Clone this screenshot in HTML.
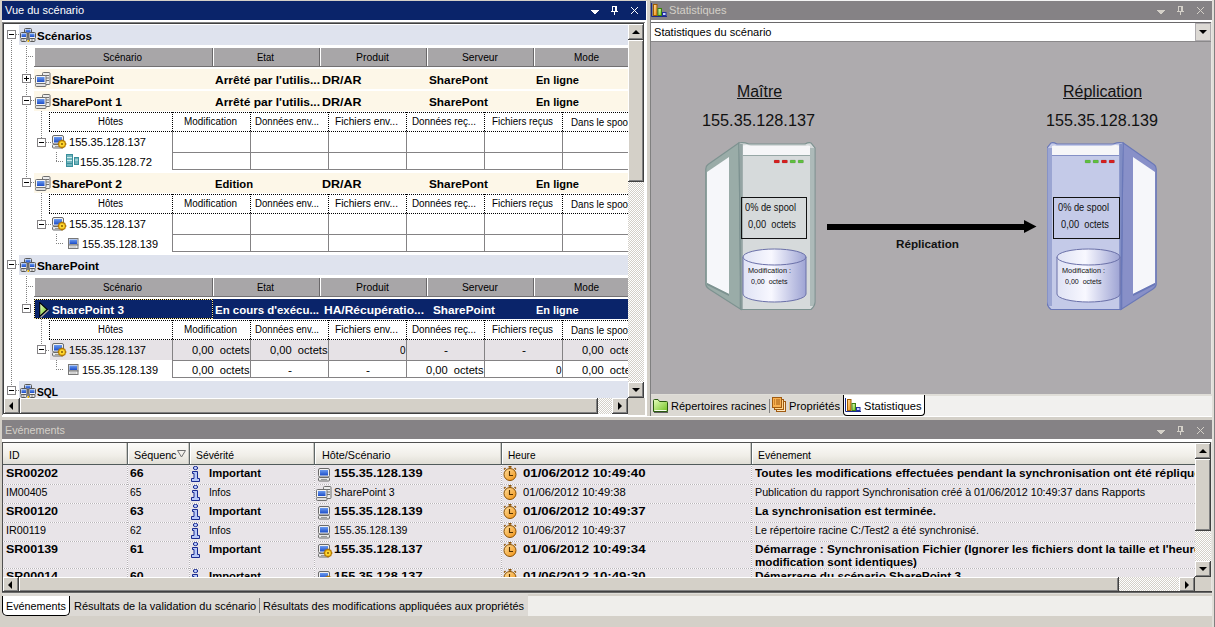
<!DOCTYPE html><html><head><meta charset="utf-8"><style>
html,body{margin:0;padding:0;width:1215px;height:627px;overflow:hidden;background:#d4d0c8}
body{position:relative;font-family:"Liberation Sans",sans-serif}
div{position:absolute;box-sizing:border-box}
.t{white-space:pre;line-height:1;height:auto;width:auto}
</style></head><body>
<svg width="0" height="0" style="position:absolute"><defs><linearGradient id="bs" x1="0" y1="0" x2="0" y2="1"><stop offset="0" stop-color="#6a9af0"/><stop offset="1" stop-color="#1e4ec8"/></linearGradient><linearGradient id="grn" x1="0" y1="0" x2="1" y2="1"><stop offset="0" stop-color="#f0ffd0"/><stop offset="1" stop-color="#60c010"/></linearGradient><linearGradient id="org" x1="0" y1="0" x2="1" y2="1"><stop offset="0" stop-color="#ffe0a0"/><stop offset="1" stop-color="#f09010"/></linearGradient><linearGradient id="fold" x1="0" y1="0" x2="1" y2="1"><stop offset="0" stop-color="#e8ffc0"/><stop offset="1" stop-color="#70c020"/></linearGradient><linearGradient id="cg" x1="0" x2="1"><stop offset="0" stop-color="#dfe2f4"/><stop offset="0.45" stop-color="#f8f8ff"/><stop offset="1" stop-color="#9ea4d4"/></linearGradient></defs></svg>
<div style="left:2px;top:1px;width:644px;height:19px;background:#0a246a"></div>
<div class="t" style="left:5px;top:4.69px;font-size:11px;font-weight:normal;color:#fff;">Vue du scénario</div>
<svg style="position:absolute;left:591px;top:7px" width="8" height="8" viewBox="0 0 8 8"><g fill="#fff"><rect x="0" y="3" width="8" height="1"/><rect x="1" y="4" width="6" height="1"/><rect x="2" y="5" width="4" height="1"/><rect x="3" y="6" width="2" height="1"/></g></svg>
<svg style="position:absolute;left:611px;top:6px" width="7" height="9" viewBox="0 0 7 9"><g fill="#fff"><rect x="1" y="0" width="5" height="1"/><rect x="1" y="1" width="1" height="4"/><rect x="4" y="1" width="2" height="4"/><rect x="0" y="5" width="7" height="1"/><rect x="3" y="6" width="1" height="3"/></g></svg>
<svg style="position:absolute;left:631px;top:7px" width="7" height="7" viewBox="0 0 7 7"><g fill="#fff"><rect x="0" y="0" width="1" height="1"/><rect x="6" y="0" width="1" height="1"/><rect x="1" y="1" width="1" height="1"/><rect x="5" y="1" width="1" height="1"/><rect x="2" y="2" width="1" height="1"/><rect x="4" y="2" width="1" height="1"/><rect x="3" y="3" width="1" height="1"/><rect x="3" y="3" width="1" height="1"/><rect x="4" y="4" width="1" height="1"/><rect x="2" y="4" width="1" height="1"/><rect x="5" y="5" width="1" height="1"/><rect x="1" y="5" width="1" height="1"/><rect x="6" y="6" width="1" height="1"/><rect x="0" y="6" width="1" height="1"/></g></svg>
<div style="left:2px;top:20px;width:644px;height:2px;background:#fff"></div>
<div style="left:2px;top:22px;width:643px;height:393px;background:#fff;border-top:1px solid #808080;border-left:1px solid #808080;"></div>
<div style="left:3px;top:23px;width:641px;height:391px;border-top:1px solid #404040;border-left:1px solid #404040;"></div>
<div style="left:11px;top:40px;width:1px;height:346px;background:repeating-linear-gradient(180deg,#808080 0 1px,transparent 1px 2px)"></div>
<div style="left:26px;top:46px;width:1px;height:28px;background:repeating-linear-gradient(180deg,#808080 0 1px,transparent 1px 2px)"></div>
<div style="left:28px;top:56px;width:6px;height:1px;background:repeating-linear-gradient(90deg,#808080 0 1px,transparent 1px 2px)"></div>
<div style="left:26px;top:84px;width:1px;height:12px;background:repeating-linear-gradient(180deg,#808080 0 1px,transparent 1px 2px)"></div>
<div style="left:26px;top:106px;width:1px;height:72px;background:repeating-linear-gradient(180deg,#808080 0 1px,transparent 1px 2px)"></div>
<div style="left:26px;top:276px;width:1px;height:28px;background:repeating-linear-gradient(180deg,#808080 0 1px,transparent 1px 2px)"></div>
<div style="left:28px;top:286px;width:6px;height:1px;background:repeating-linear-gradient(90deg,#808080 0 1px,transparent 1px 2px)"></div>
<div style="left:19px;top:25px;width:609px;height:20px;background:#dfe3ee"></div>
<svg style="position:absolute;left:7px;top:30px" width="9" height="9" viewBox="0 0 9 9"><rect x="0.5" y="0.5" width="8" height="8" fill="#fff" stroke="#848284"/><line x1="2" y1="4.5" x2="7" y2="4.5" stroke="#000"/></svg>
<div style="left:16px;top:34px;width:4px;height:1px;background:repeating-linear-gradient(90deg,#808080 0 1px,transparent 1px 2px)"></div>
<svg style="position:absolute;left:20px;top:28px" width="16" height="15" viewBox="0 0 16 15"><rect x="7" y="4" width="2" height="8" fill="#808080"/><rect x="4.5" y="0.5" width="7" height="4.5" rx="1" fill="#f4f4f4" stroke="#585858"/><rect x="5.5" y="1.5" width="5" height="3" fill="url(#bs)"/><rect x="0.5" y="4.5" width="6.5" height="6" rx="1" fill="#f4f4f4" stroke="#585858"/><rect x="1.5" y="5.5" width="4.5" height="3.5" fill="url(#bs)"/><rect x="9" y="4.5" width="6.5" height="6" rx="1" fill="#f4f4f4" stroke="#585858"/><rect x="10" y="5.5" width="4.5" height="3.5" fill="url(#bs)"/><rect x="1" y="10.5" width="5.5" height="3" rx="1" fill="#e4e4e4" stroke="#585858"/><rect x="9.5" y="10.5" width="5.5" height="3" rx="1" fill="#e4e4e4" stroke="#585858"/><line x1="2.5" y1="12" x2="4.5" y2="12" stroke="#888"/><line x1="11" y1="12" x2="13" y2="12" stroke="#888"/><rect x="7.5" y="12" width="1.5" height="2" fill="#f0b800"/></svg>
<div class="t" style="left:37px;top:30.69px;font-size:11px;font-weight:bold;color:#000;transform:scaleX(1.0460);transform-origin:0 0;">Scénarios</div>
<div style="left:35px;top:48px;width:593px;height:19px;background:#a8a6a8"></div>
<div style="left:34px;top:66px;width:594px;height:1px;background:#727072"></div>
<div style="left:212px;top:48px;width:1px;height:18px;background:#6a686a"></div>
<div style="left:213px;top:48px;width:1px;height:18px;background:#fff"></div>
<div style="left:319px;top:48px;width:1px;height:18px;background:#6a686a"></div>
<div style="left:320px;top:48px;width:1px;height:18px;background:#fff"></div>
<div style="left:426px;top:48px;width:1px;height:18px;background:#6a686a"></div>
<div style="left:427px;top:48px;width:1px;height:18px;background:#fff"></div>
<div style="left:533px;top:48px;width:1px;height:18px;background:#6a686a"></div>
<div style="left:534px;top:48px;width:1px;height:18px;background:#fff"></div>
<div class="t" style="left:103px;top:52.53px;font-size:10px;font-weight:normal;color:#000;transform:scaleX(0.9881);transform-origin:0 0;">Scénario</div>
<div class="t" style="left:257px;top:52.53px;font-size:10px;font-weight:normal;color:#000;transform:scaleX(0.9557);transform-origin:0 0;">Etat</div>
<div class="t" style="left:356px;top:52.53px;font-size:10px;font-weight:normal;color:#000;transform:scaleX(1.0415);transform-origin:0 0;">Produit</div>
<div class="t" style="left:462px;top:52.53px;font-size:10px;font-weight:normal;color:#000;transform:scaleX(1.0281);transform-origin:0 0;">Serveur</div>
<div class="t" style="left:574px;top:52.53px;font-size:10px;font-weight:normal;color:#000;">Mode</div>
<div style="left:31px;top:78px;width:4px;height:1px;background:repeating-linear-gradient(90deg,#808080 0 1px,transparent 1px 2px)"></div>
<div style="left:34px;top:69px;width:594px;height:20px;background:#fdf7e8"></div>
<svg style="position:absolute;left:22px;top:74px" width="9" height="9" viewBox="0 0 9 9"><rect x="0.5" y="0.5" width="8" height="8" fill="#fff" stroke="#848284"/><line x1="2" y1="4.5" x2="7" y2="4.5" stroke="#000"/><line x1="4.5" y1="2" x2="4.5" y2="7" stroke="#000"/></svg>
<svg style="position:absolute;left:35px;top:72px" width="16" height="15" viewBox="0 0 16 15"><rect x="7.5" y="0.5" width="7.5" height="12" rx="1" fill="#ececec" stroke="#707070"/><line x1="10" y1="3.5" x2="14" y2="3.5" stroke="#707070"/><line x1="10" y1="6" x2="14" y2="6" stroke="#707070"/><line x1="10" y1="8.5" x2="14" y2="8.5" stroke="#707070"/><rect x="0.5" y="3.5" width="10.5" height="8" rx="1" fill="#f4f4f4" stroke="#707070"/><rect x="2" y="5" width="7.5" height="5" fill="url(#bs)"/><rect x="0.5" y="11.5" width="10.5" height="3" rx="1" fill="#e0e0e0" stroke="#707070"/></svg>
<div class="t" style="left:52px;top:74.69px;font-size:11px;font-weight:bold;color:#000;transform:scaleX(1.0677);transform-origin:0 0;">SharePoint</div>
<div class="t" style="left:215px;top:74.69px;font-size:11px;font-weight:bold;color:#000;transform:scaleX(1.0921);transform-origin:0 0;">Arrêté par l&#x27;utilis...</div>
<div class="t" style="left:322px;top:74.69px;font-size:11px;font-weight:bold;color:#000;transform:scaleX(1.1340);transform-origin:0 0;">DR/AR</div>
<div class="t" style="left:429px;top:74.69px;font-size:11px;font-weight:bold;color:#000;transform:scaleX(1.0725);transform-origin:0 0;">SharePont</div>
<div class="t" style="left:536px;top:74.69px;font-size:11px;font-weight:bold;color:#000;transform:scaleX(1.0051);transform-origin:0 0;">En ligne</div>
<div style="left:31px;top:100px;width:4px;height:1px;background:repeating-linear-gradient(90deg,#808080 0 1px,transparent 1px 2px)"></div>
<div style="left:34px;top:91px;width:594px;height:20px;background:#fdf7e8"></div>
<svg style="position:absolute;left:22px;top:96px" width="9" height="9" viewBox="0 0 9 9"><rect x="0.5" y="0.5" width="8" height="8" fill="#fff" stroke="#848284"/><line x1="2" y1="4.5" x2="7" y2="4.5" stroke="#000"/></svg>
<svg style="position:absolute;left:35px;top:94px" width="16" height="15" viewBox="0 0 16 15"><rect x="7.5" y="0.5" width="7.5" height="12" rx="1" fill="#ececec" stroke="#707070"/><line x1="10" y1="3.5" x2="14" y2="3.5" stroke="#707070"/><line x1="10" y1="6" x2="14" y2="6" stroke="#707070"/><line x1="10" y1="8.5" x2="14" y2="8.5" stroke="#707070"/><rect x="0.5" y="3.5" width="10.5" height="8" rx="1" fill="#f4f4f4" stroke="#707070"/><rect x="2" y="5" width="7.5" height="5" fill="url(#bs)"/><rect x="0.5" y="11.5" width="10.5" height="3" rx="1" fill="#e0e0e0" stroke="#707070"/></svg>
<div class="t" style="left:52px;top:96.69px;font-size:11px;font-weight:bold;color:#000;transform:scaleX(1.0906);transform-origin:0 0;">SharePont 1</div>
<div class="t" style="left:215px;top:96.69px;font-size:11px;font-weight:bold;color:#000;transform:scaleX(1.0921);transform-origin:0 0;">Arrêté par l&#x27;utilis...</div>
<div class="t" style="left:322px;top:96.69px;font-size:11px;font-weight:bold;color:#000;transform:scaleX(1.1340);transform-origin:0 0;">DR/AR</div>
<div class="t" style="left:429px;top:96.69px;font-size:11px;font-weight:bold;color:#000;transform:scaleX(1.0725);transform-origin:0 0;">SharePont</div>
<div class="t" style="left:536px;top:96.69px;font-size:11px;font-weight:bold;color:#000;transform:scaleX(1.0051);transform-origin:0 0;">En ligne</div>
<div style="left:41px;top:111px;width:1px;height:27px;background:repeating-linear-gradient(180deg,#808080 0 1px,transparent 1px 2px)"></div>
<div style="left:46px;top:142px;width:6px;height:1px;background:repeating-linear-gradient(90deg,#808080 0 1px,transparent 1px 2px)"></div>
<div style="left:49px;top:112px;width:580px;height:1px;background:repeating-linear-gradient(90deg,#000 0 1px,transparent 1px 2px)"></div>
<div style="left:49px;top:131px;width:580px;height:1px;background:repeating-linear-gradient(90deg,#000 0 1px,transparent 1px 2px)"></div>
<div style="left:49px;top:112px;width:1px;height:20px;background:repeating-linear-gradient(180deg,#000 0 1px,transparent 1px 2px)"></div>
<div style="left:628px;top:112px;width:1px;height:20px;background:repeating-linear-gradient(180deg,#000 0 1px,transparent 1px 2px)"></div>
<div style="left:172px;top:112px;width:1px;height:20px;background:repeating-linear-gradient(180deg,#000 0 1px,transparent 1px 2px)"></div>
<div style="left:250px;top:112px;width:1px;height:20px;background:repeating-linear-gradient(180deg,#000 0 1px,transparent 1px 2px)"></div>
<div style="left:328px;top:112px;width:1px;height:20px;background:repeating-linear-gradient(180deg,#000 0 1px,transparent 1px 2px)"></div>
<div style="left:406px;top:112px;width:1px;height:20px;background:repeating-linear-gradient(180deg,#000 0 1px,transparent 1px 2px)"></div>
<div style="left:484px;top:112px;width:1px;height:20px;background:repeating-linear-gradient(180deg,#000 0 1px,transparent 1px 2px)"></div>
<div style="left:562px;top:112px;width:1px;height:20px;background:repeating-linear-gradient(180deg,#000 0 1px,transparent 1px 2px)"></div>
<div class="t" style="left:98px;top:116.53px;font-size:10px;font-weight:normal;color:#000;transform:scaleX(0.9570);transform-origin:0 0;">Hôtes</div>
<div class="t" style="left:184px;top:116.53px;font-size:10px;font-weight:normal;color:#000;transform:scaleX(0.9933);transform-origin:0 0;">Modification</div>
<div class="t" style="left:255px;top:116.53px;font-size:10px;font-weight:normal;color:#000;transform:scaleX(0.9621);transform-origin:0 0;">Données env...</div>
<div class="t" style="left:335px;top:116.53px;font-size:10px;font-weight:normal;color:#000;transform:scaleX(1.0244);transform-origin:0 0;">Fichiers env...</div>
<div class="t" style="left:412px;top:116.53px;font-size:10px;font-weight:normal;color:#000;transform:scaleX(0.9841);transform-origin:0 0;">Données reç...</div>
<div class="t" style="left:492px;top:116.53px;font-size:10px;font-weight:normal;color:#000;transform:scaleX(0.9801);transform-origin:0 0;">Fichiers reçus</div>
<div style="left:571px;top:113px;width:57px;height:18px;overflow:hidden">
<div class="t" style="left:0px;top:4.54px;font-size:10px;font-weight:normal;color:#000;transform:scaleX(0.9765);transform-origin:0 0;">Dans le spoo</div>
</div>
<div style="left:172px;top:152px;width:456px;height:1px;background:#848284"></div>
<div style="left:172px;top:131px;width:1px;height:21px;background:#848284"></div>
<div style="left:250px;top:131px;width:1px;height:21px;background:#848284"></div>
<div style="left:328px;top:131px;width:1px;height:21px;background:#848284"></div>
<div style="left:406px;top:131px;width:1px;height:21px;background:#848284"></div>
<div style="left:484px;top:131px;width:1px;height:21px;background:#848284"></div>
<div style="left:562px;top:131px;width:1px;height:21px;background:#848284"></div>
<div style="left:172px;top:169px;width:456px;height:1px;background:#848284"></div>
<div style="left:172px;top:152px;width:1px;height:17px;background:#848284"></div>
<div style="left:250px;top:152px;width:1px;height:17px;background:#848284"></div>
<div style="left:328px;top:152px;width:1px;height:17px;background:#848284"></div>
<div style="left:406px;top:152px;width:1px;height:17px;background:#848284"></div>
<div style="left:484px;top:152px;width:1px;height:17px;background:#848284"></div>
<div style="left:562px;top:152px;width:1px;height:17px;background:#848284"></div>
<svg style="position:absolute;left:37px;top:138px" width="9" height="9" viewBox="0 0 9 9"><rect x="0.5" y="0.5" width="8" height="8" fill="#fff" stroke="#848284"/><line x1="2" y1="4.5" x2="7" y2="4.5" stroke="#000"/></svg>
<svg style="position:absolute;left:52px;top:135px" width="12" height="14" viewBox="0 0 12 14"><rect x="0.5" y="0.5" width="11" height="8.5" rx="1.5" fill="#f0f0f0" stroke="#6a6a6a"/><rect x="2" y="2" width="8" height="5.5" fill="url(#bs)"/><rect x="0.5" y="9.5" width="11" height="3.5" rx="1" fill="#e8e8e8" stroke="#6a6a6a"/><line x1="3" y1="11.5" x2="9" y2="11.5" stroke="#999"/></svg>
<svg style="position:absolute;left:57px;top:139px" width="10" height="10" viewBox="0 0 10 10"><g transform="translate(5 5)"><circle r="3.6" fill="#f8c820" stroke="#a06800" stroke-width="1"/><path d="M0 -4.6 V4.6 M-4.6 0 H4.6 M-3.2 -3.2 L3.2 3.2 M3.2 -3.2 L-3.2 3.2" stroke="#c08000" stroke-width="1.2"/><circle r="2.6" fill="#ffd830"/><circle r="0.9" fill="#7a5000"/></g></svg>
<div class="t" style="left:69px;top:136.69px;font-size:11px;font-weight:normal;color:#000;transform:scaleX(1.0070);transform-origin:0 0;">155.35.128.137</div>
<div style="left:56px;top:152px;width:1px;height:10px;background:repeating-linear-gradient(180deg,#808080 0 1px,transparent 1px 2px)"></div>
<div style="left:56px;top:161px;width:7px;height:1px;background:repeating-linear-gradient(90deg,#808080 0 1px,transparent 1px 2px)"></div>
<svg style="position:absolute;left:66px;top:154px" width="14" height="13" viewBox="0 0 14 13"><rect x="0" y="0" width="7" height="13" fill="#3a8f9c"/><rect x="1" y="1" width="5" height="11" fill="#70b4bc"/><line x1="1" y1="3.5" x2="6" y2="3.5" stroke="#d0eef0"/><line x1="1" y1="6.5" x2="6" y2="6.5" stroke="#d0eef0"/><line x1="1" y1="9.5" x2="6" y2="9.5" stroke="#3a8f9c"/><rect x="8" y="3" width="5" height="8" fill="#3a8f9c"/><rect x="9" y="4" width="3" height="6" fill="#70b4bc"/><line x1="9" y1="6" x2="12" y2="6" stroke="#d0eef0"/></svg>
<div class="t" style="left:80px;top:156.69px;font-size:11px;font-weight:normal;color:#000;transform:scaleX(1.0235);transform-origin:0 0;">155.35.128.72</div>
<div style="left:31px;top:182px;width:4px;height:1px;background:repeating-linear-gradient(90deg,#808080 0 1px,transparent 1px 2px)"></div>
<div style="left:34px;top:173px;width:594px;height:20px;background:#fdf7e8"></div>
<svg style="position:absolute;left:22px;top:178px" width="9" height="9" viewBox="0 0 9 9"><rect x="0.5" y="0.5" width="8" height="8" fill="#fff" stroke="#848284"/><line x1="2" y1="4.5" x2="7" y2="4.5" stroke="#000"/></svg>
<svg style="position:absolute;left:35px;top:176px" width="16" height="15" viewBox="0 0 16 15"><rect x="7.5" y="0.5" width="7.5" height="12" rx="1" fill="#ececec" stroke="#707070"/><line x1="10" y1="3.5" x2="14" y2="3.5" stroke="#707070"/><line x1="10" y1="6" x2="14" y2="6" stroke="#707070"/><line x1="10" y1="8.5" x2="14" y2="8.5" stroke="#707070"/><rect x="0.5" y="3.5" width="10.5" height="8" rx="1" fill="#f4f4f4" stroke="#707070"/><rect x="2" y="5" width="7.5" height="5" fill="url(#bs)"/><rect x="0.5" y="11.5" width="10.5" height="3" rx="1" fill="#e0e0e0" stroke="#707070"/></svg>
<div class="t" style="left:52px;top:178.69px;font-size:11px;font-weight:bold;color:#000;transform:scaleX(1.0906);transform-origin:0 0;">SharePont 2</div>
<div class="t" style="left:215px;top:178.69px;font-size:11px;font-weight:bold;color:#000;transform:scaleX(1.0196);transform-origin:0 0;">Edition</div>
<div class="t" style="left:322px;top:178.69px;font-size:11px;font-weight:bold;color:#000;transform:scaleX(1.1340);transform-origin:0 0;">DR/AR</div>
<div class="t" style="left:429px;top:178.69px;font-size:11px;font-weight:bold;color:#000;transform:scaleX(1.0725);transform-origin:0 0;">SharePont</div>
<div class="t" style="left:536px;top:178.69px;font-size:11px;font-weight:bold;color:#000;transform:scaleX(1.0051);transform-origin:0 0;">En ligne</div>
<div style="left:41px;top:193px;width:1px;height:27px;background:repeating-linear-gradient(180deg,#808080 0 1px,transparent 1px 2px)"></div>
<div style="left:46px;top:224px;width:6px;height:1px;background:repeating-linear-gradient(90deg,#808080 0 1px,transparent 1px 2px)"></div>
<div style="left:49px;top:194px;width:580px;height:1px;background:repeating-linear-gradient(90deg,#000 0 1px,transparent 1px 2px)"></div>
<div style="left:49px;top:213px;width:580px;height:1px;background:repeating-linear-gradient(90deg,#000 0 1px,transparent 1px 2px)"></div>
<div style="left:49px;top:194px;width:1px;height:20px;background:repeating-linear-gradient(180deg,#000 0 1px,transparent 1px 2px)"></div>
<div style="left:628px;top:194px;width:1px;height:20px;background:repeating-linear-gradient(180deg,#000 0 1px,transparent 1px 2px)"></div>
<div style="left:172px;top:194px;width:1px;height:20px;background:repeating-linear-gradient(180deg,#000 0 1px,transparent 1px 2px)"></div>
<div style="left:250px;top:194px;width:1px;height:20px;background:repeating-linear-gradient(180deg,#000 0 1px,transparent 1px 2px)"></div>
<div style="left:328px;top:194px;width:1px;height:20px;background:repeating-linear-gradient(180deg,#000 0 1px,transparent 1px 2px)"></div>
<div style="left:406px;top:194px;width:1px;height:20px;background:repeating-linear-gradient(180deg,#000 0 1px,transparent 1px 2px)"></div>
<div style="left:484px;top:194px;width:1px;height:20px;background:repeating-linear-gradient(180deg,#000 0 1px,transparent 1px 2px)"></div>
<div style="left:562px;top:194px;width:1px;height:20px;background:repeating-linear-gradient(180deg,#000 0 1px,transparent 1px 2px)"></div>
<div class="t" style="left:98px;top:198.53px;font-size:10px;font-weight:normal;color:#000;transform:scaleX(0.9570);transform-origin:0 0;">Hôtes</div>
<div class="t" style="left:184px;top:198.53px;font-size:10px;font-weight:normal;color:#000;transform:scaleX(0.9933);transform-origin:0 0;">Modification</div>
<div class="t" style="left:255px;top:198.53px;font-size:10px;font-weight:normal;color:#000;transform:scaleX(0.9621);transform-origin:0 0;">Données env...</div>
<div class="t" style="left:335px;top:198.53px;font-size:10px;font-weight:normal;color:#000;transform:scaleX(1.0244);transform-origin:0 0;">Fichiers env...</div>
<div class="t" style="left:412px;top:198.53px;font-size:10px;font-weight:normal;color:#000;transform:scaleX(0.9841);transform-origin:0 0;">Données reç...</div>
<div class="t" style="left:492px;top:198.53px;font-size:10px;font-weight:normal;color:#000;transform:scaleX(0.9801);transform-origin:0 0;">Fichiers reçus</div>
<div style="left:571px;top:195px;width:57px;height:18px;overflow:hidden">
<div class="t" style="left:0px;top:4.54px;font-size:10px;font-weight:normal;color:#000;transform:scaleX(0.9765);transform-origin:0 0;">Dans le spoo</div>
</div>
<div style="left:172px;top:234px;width:456px;height:1px;background:#848284"></div>
<div style="left:172px;top:213px;width:1px;height:21px;background:#848284"></div>
<div style="left:250px;top:213px;width:1px;height:21px;background:#848284"></div>
<div style="left:328px;top:213px;width:1px;height:21px;background:#848284"></div>
<div style="left:406px;top:213px;width:1px;height:21px;background:#848284"></div>
<div style="left:484px;top:213px;width:1px;height:21px;background:#848284"></div>
<div style="left:562px;top:213px;width:1px;height:21px;background:#848284"></div>
<div style="left:172px;top:251px;width:456px;height:1px;background:#848284"></div>
<div style="left:172px;top:234px;width:1px;height:17px;background:#848284"></div>
<div style="left:250px;top:234px;width:1px;height:17px;background:#848284"></div>
<div style="left:328px;top:234px;width:1px;height:17px;background:#848284"></div>
<div style="left:406px;top:234px;width:1px;height:17px;background:#848284"></div>
<div style="left:484px;top:234px;width:1px;height:17px;background:#848284"></div>
<div style="left:562px;top:234px;width:1px;height:17px;background:#848284"></div>
<svg style="position:absolute;left:37px;top:220px" width="9" height="9" viewBox="0 0 9 9"><rect x="0.5" y="0.5" width="8" height="8" fill="#fff" stroke="#848284"/><line x1="2" y1="4.5" x2="7" y2="4.5" stroke="#000"/></svg>
<svg style="position:absolute;left:52px;top:217px" width="12" height="14" viewBox="0 0 12 14"><rect x="0.5" y="0.5" width="11" height="8.5" rx="1.5" fill="#f0f0f0" stroke="#6a6a6a"/><rect x="2" y="2" width="8" height="5.5" fill="url(#bs)"/><rect x="0.5" y="9.5" width="11" height="3.5" rx="1" fill="#e8e8e8" stroke="#6a6a6a"/><line x1="3" y1="11.5" x2="9" y2="11.5" stroke="#999"/></svg>
<svg style="position:absolute;left:57px;top:221px" width="10" height="10" viewBox="0 0 10 10"><g transform="translate(5 5)"><circle r="3.6" fill="#f8c820" stroke="#a06800" stroke-width="1"/><path d="M0 -4.6 V4.6 M-4.6 0 H4.6 M-3.2 -3.2 L3.2 3.2 M3.2 -3.2 L-3.2 3.2" stroke="#c08000" stroke-width="1.2"/><circle r="2.6" fill="#ffd830"/><circle r="0.9" fill="#7a5000"/></g></svg>
<div class="t" style="left:69px;top:218.69px;font-size:11px;font-weight:normal;color:#000;transform:scaleX(1.0070);transform-origin:0 0;">155.35.128.137</div>
<div style="left:56px;top:234px;width:1px;height:8px;background:repeating-linear-gradient(180deg,#808080 0 1px,transparent 1px 2px)"></div>
<div style="left:56px;top:243px;width:7px;height:1px;background:repeating-linear-gradient(90deg,#808080 0 1px,transparent 1px 2px)"></div>
<svg style="position:absolute;left:68px;top:238px" width="11" height="11" viewBox="0 0 11 11"><rect x="0.5" y="0.5" width="9.5" height="6.5" fill="#f0f0f0" stroke="#777"/><rect x="1.5" y="1.5" width="7.5" height="4.5" fill="url(#bs)"/><rect x="0.5" y="7" width="9.5" height="3.5" fill="#eaeaea" stroke="#777"/><line x1="2" y1="9" x2="8" y2="9" stroke="#bbb"/></svg>
<div class="t" style="left:82px;top:238.69px;font-size:11px;font-weight:normal;color:#000;transform:scaleX(0.9939);transform-origin:0 0;">155.35.128.139</div>
<div style="left:19px;top:255px;width:609px;height:20px;background:#dfe3ee"></div>
<svg style="position:absolute;left:7px;top:260px" width="9" height="9" viewBox="0 0 9 9"><rect x="0.5" y="0.5" width="8" height="8" fill="#fff" stroke="#848284"/><line x1="2" y1="4.5" x2="7" y2="4.5" stroke="#000"/></svg>
<div style="left:16px;top:264px;width:4px;height:1px;background:repeating-linear-gradient(90deg,#808080 0 1px,transparent 1px 2px)"></div>
<svg style="position:absolute;left:20px;top:258px" width="16" height="15" viewBox="0 0 16 15"><rect x="7" y="4" width="2" height="8" fill="#808080"/><rect x="4.5" y="0.5" width="7" height="4.5" rx="1" fill="#f4f4f4" stroke="#585858"/><rect x="5.5" y="1.5" width="5" height="3" fill="url(#bs)"/><rect x="0.5" y="4.5" width="6.5" height="6" rx="1" fill="#f4f4f4" stroke="#585858"/><rect x="1.5" y="5.5" width="4.5" height="3.5" fill="url(#bs)"/><rect x="9" y="4.5" width="6.5" height="6" rx="1" fill="#f4f4f4" stroke="#585858"/><rect x="10" y="5.5" width="4.5" height="3.5" fill="url(#bs)"/><rect x="1" y="10.5" width="5.5" height="3" rx="1" fill="#e4e4e4" stroke="#585858"/><rect x="9.5" y="10.5" width="5.5" height="3" rx="1" fill="#e4e4e4" stroke="#585858"/><line x1="2.5" y1="12" x2="4.5" y2="12" stroke="#888"/><line x1="11" y1="12" x2="13" y2="12" stroke="#888"/><rect x="7.5" y="12" width="1.5" height="2" fill="#f0b800"/></svg>
<div class="t" style="left:37px;top:260.69px;font-size:11px;font-weight:bold;color:#000;transform:scaleX(1.0677);transform-origin:0 0;">SharePoint</div>
<div style="left:35px;top:278px;width:593px;height:19px;background:#a8a6a8"></div>
<div style="left:34px;top:296px;width:594px;height:1px;background:#727072"></div>
<div style="left:212px;top:278px;width:1px;height:18px;background:#6a686a"></div>
<div style="left:213px;top:278px;width:1px;height:18px;background:#fff"></div>
<div style="left:319px;top:278px;width:1px;height:18px;background:#6a686a"></div>
<div style="left:320px;top:278px;width:1px;height:18px;background:#fff"></div>
<div style="left:426px;top:278px;width:1px;height:18px;background:#6a686a"></div>
<div style="left:427px;top:278px;width:1px;height:18px;background:#fff"></div>
<div style="left:533px;top:278px;width:1px;height:18px;background:#6a686a"></div>
<div style="left:534px;top:278px;width:1px;height:18px;background:#fff"></div>
<div class="t" style="left:103px;top:282.54px;font-size:10px;font-weight:normal;color:#000;transform:scaleX(0.9881);transform-origin:0 0;">Scénario</div>
<div class="t" style="left:257px;top:282.54px;font-size:10px;font-weight:normal;color:#000;transform:scaleX(0.9557);transform-origin:0 0;">Etat</div>
<div class="t" style="left:356px;top:282.54px;font-size:10px;font-weight:normal;color:#000;transform:scaleX(1.0415);transform-origin:0 0;">Produit</div>
<div class="t" style="left:462px;top:282.54px;font-size:10px;font-weight:normal;color:#000;transform:scaleX(1.0281);transform-origin:0 0;">Serveur</div>
<div class="t" style="left:574px;top:282.54px;font-size:10px;font-weight:normal;color:#000;">Mode</div>
<div style="left:34px;top:299px;width:594px;height:20px;background:#0a246a"></div>
<svg style="position:absolute;left:22px;top:304px" width="9" height="9" viewBox="0 0 9 9"><rect x="0.5" y="0.5" width="8" height="8" fill="#fff" stroke="#848284"/><line x1="2" y1="4.5" x2="7" y2="4.5" stroke="#000"/></svg>
<svg style="position:absolute;left:39px;top:302px" width="11" height="16" viewBox="0 0 11 16"><path d="M1.5 15.5 L9.5 8" stroke="#b0a8a0" stroke-width="1.3"/><path d="M0.7 0.7 L8.3 7.5 L0.7 14.3 Z" fill="url(#grn)" stroke="#000" stroke-width="1.1"/></svg>
<div class="t" style="left:52px;top:304.69px;font-size:11px;font-weight:bold;color:#fff;transform:scaleX(1.0708);transform-origin:0 0;">SharePoint 3</div>
<div class="t" style="left:215px;top:304.69px;font-size:11px;font-weight:bold;color:#fff;transform:scaleX(1.0419);transform-origin:0 0;">En cours d&#x27;exécu...</div>
<div class="t" style="left:324px;top:304.69px;font-size:11px;font-weight:bold;color:#fff;transform:scaleX(1.0907);transform-origin:0 0;">HA/Récupératio...</div>
<div class="t" style="left:433px;top:304.69px;font-size:11px;font-weight:bold;color:#fff;transform:scaleX(1.0677);transform-origin:0 0;">SharePoint</div>
<div class="t" style="left:536px;top:304.69px;font-size:11px;font-weight:bold;color:#fff;transform:scaleX(0.9934);transform-origin:0 0;">En ligne</div>
<div style="left:34px;top:299px;width:179px;height:1px;background:repeating-linear-gradient(90deg,#000 0 1px,#f4e4a0 1px 2px)"></div>
<div style="left:34px;top:318px;width:179px;height:1px;background:repeating-linear-gradient(90deg,#000 0 1px,#f4e4a0 1px 2px)"></div>
<div style="left:34px;top:299px;width:1px;height:20px;background:repeating-linear-gradient(180deg,#000 0 1px,#f4e4a0 1px 2px)"></div>
<div style="left:212px;top:299px;width:1px;height:20px;background:repeating-linear-gradient(180deg,#000 0 1px,#f4e4a0 1px 2px)"></div>
<div style="left:41px;top:319px;width:1px;height:27px;background:repeating-linear-gradient(180deg,#808080 0 1px,transparent 1px 2px)"></div>
<div style="left:46px;top:350px;width:6px;height:1px;background:repeating-linear-gradient(90deg,#808080 0 1px,transparent 1px 2px)"></div>
<div style="left:49px;top:320px;width:580px;height:1px;background:repeating-linear-gradient(90deg,#000 0 1px,transparent 1px 2px)"></div>
<div style="left:49px;top:339px;width:580px;height:1px;background:repeating-linear-gradient(90deg,#000 0 1px,transparent 1px 2px)"></div>
<div style="left:49px;top:320px;width:1px;height:20px;background:repeating-linear-gradient(180deg,#000 0 1px,transparent 1px 2px)"></div>
<div style="left:628px;top:320px;width:1px;height:20px;background:repeating-linear-gradient(180deg,#000 0 1px,transparent 1px 2px)"></div>
<div style="left:172px;top:320px;width:1px;height:20px;background:repeating-linear-gradient(180deg,#000 0 1px,transparent 1px 2px)"></div>
<div style="left:250px;top:320px;width:1px;height:20px;background:repeating-linear-gradient(180deg,#000 0 1px,transparent 1px 2px)"></div>
<div style="left:328px;top:320px;width:1px;height:20px;background:repeating-linear-gradient(180deg,#000 0 1px,transparent 1px 2px)"></div>
<div style="left:406px;top:320px;width:1px;height:20px;background:repeating-linear-gradient(180deg,#000 0 1px,transparent 1px 2px)"></div>
<div style="left:484px;top:320px;width:1px;height:20px;background:repeating-linear-gradient(180deg,#000 0 1px,transparent 1px 2px)"></div>
<div style="left:562px;top:320px;width:1px;height:20px;background:repeating-linear-gradient(180deg,#000 0 1px,transparent 1px 2px)"></div>
<div class="t" style="left:98px;top:324.54px;font-size:10px;font-weight:normal;color:#000;transform:scaleX(0.9570);transform-origin:0 0;">Hôtes</div>
<div class="t" style="left:184px;top:324.54px;font-size:10px;font-weight:normal;color:#000;transform:scaleX(0.9933);transform-origin:0 0;">Modification</div>
<div class="t" style="left:255px;top:324.54px;font-size:10px;font-weight:normal;color:#000;transform:scaleX(0.9621);transform-origin:0 0;">Données env...</div>
<div class="t" style="left:335px;top:324.54px;font-size:10px;font-weight:normal;color:#000;transform:scaleX(1.0244);transform-origin:0 0;">Fichiers env...</div>
<div class="t" style="left:412px;top:324.54px;font-size:10px;font-weight:normal;color:#000;transform:scaleX(0.9841);transform-origin:0 0;">Données reç...</div>
<div class="t" style="left:492px;top:324.54px;font-size:10px;font-weight:normal;color:#000;transform:scaleX(0.9801);transform-origin:0 0;">Fichiers reçus</div>
<div style="left:571px;top:321px;width:57px;height:18px;overflow:hidden">
<div class="t" style="left:0px;top:4.54px;font-size:10px;font-weight:normal;color:#000;transform:scaleX(0.9765);transform-origin:0 0;">Dans le spoo</div>
</div>
<div style="left:50px;top:340px;width:578px;height:20px;background:#e6e2e6"></div>
<div style="left:172px;top:360px;width:456px;height:1px;background:#848284"></div>
<div style="left:172px;top:339px;width:1px;height:21px;background:#848284"></div>
<div style="left:250px;top:339px;width:1px;height:21px;background:#848284"></div>
<div style="left:328px;top:339px;width:1px;height:21px;background:#848284"></div>
<div style="left:406px;top:339px;width:1px;height:21px;background:#848284"></div>
<div style="left:484px;top:339px;width:1px;height:21px;background:#848284"></div>
<div style="left:562px;top:339px;width:1px;height:21px;background:#848284"></div>
<div style="left:172px;top:377px;width:456px;height:1px;background:#848284"></div>
<div style="left:172px;top:360px;width:1px;height:17px;background:#848284"></div>
<div style="left:250px;top:360px;width:1px;height:17px;background:#848284"></div>
<div style="left:328px;top:360px;width:1px;height:17px;background:#848284"></div>
<div style="left:406px;top:360px;width:1px;height:17px;background:#848284"></div>
<div style="left:484px;top:360px;width:1px;height:17px;background:#848284"></div>
<div style="left:562px;top:360px;width:1px;height:17px;background:#848284"></div>
<svg style="position:absolute;left:37px;top:345px" width="9" height="9" viewBox="0 0 9 9"><rect x="0.5" y="0.5" width="8" height="8" fill="#fff" stroke="#848284"/><line x1="2" y1="4.5" x2="7" y2="4.5" stroke="#000"/></svg>
<svg style="position:absolute;left:52px;top:343px" width="12" height="14" viewBox="0 0 12 14"><rect x="0.5" y="0.5" width="11" height="8.5" rx="1.5" fill="#f0f0f0" stroke="#6a6a6a"/><rect x="2" y="2" width="8" height="5.5" fill="url(#bs)"/><rect x="0.5" y="9.5" width="11" height="3.5" rx="1" fill="#e8e8e8" stroke="#6a6a6a"/><line x1="3" y1="11.5" x2="9" y2="11.5" stroke="#999"/></svg>
<svg style="position:absolute;left:57px;top:347px" width="10" height="10" viewBox="0 0 10 10"><g transform="translate(5 5)"><circle r="3.6" fill="#f8c820" stroke="#a06800" stroke-width="1"/><path d="M0 -4.6 V4.6 M-4.6 0 H4.6 M-3.2 -3.2 L3.2 3.2 M3.2 -3.2 L-3.2 3.2" stroke="#c08000" stroke-width="1.2"/><circle r="2.6" fill="#ffd830"/><circle r="0.9" fill="#7a5000"/></g></svg>
<div class="t" style="left:69px;top:344.69px;font-size:11px;font-weight:normal;color:#000;transform:scaleX(1.0070);transform-origin:0 0;">155.35.128.137</div>
<div style="left:56px;top:360px;width:1px;height:8px;background:repeating-linear-gradient(180deg,#808080 0 1px,transparent 1px 2px)"></div>
<div style="left:56px;top:369px;width:7px;height:1px;background:repeating-linear-gradient(90deg,#808080 0 1px,transparent 1px 2px)"></div>
<svg style="position:absolute;left:68px;top:364px" width="11" height="11" viewBox="0 0 11 11"><rect x="0.5" y="0.5" width="9.5" height="6.5" fill="#f0f0f0" stroke="#777"/><rect x="1.5" y="1.5" width="7.5" height="4.5" fill="url(#bs)"/><rect x="0.5" y="7" width="9.5" height="3.5" fill="#eaeaea" stroke="#777"/><line x1="2" y1="9" x2="8" y2="9" stroke="#bbb"/></svg>
<div class="t" style="left:82px;top:364.69px;font-size:11px;font-weight:normal;color:#000;transform:scaleX(0.9939);transform-origin:0 0;">155.35.128.139</div>
<div class="t" style="left:191.5px;top:344.69px;font-size:11px;font-weight:normal;color:#000;transform:scaleX(1.0111);transform-origin:0 0;">0,00  octets</div>
<div class="t" style="left:269.5px;top:344.69px;font-size:11px;font-weight:normal;color:#000;transform:scaleX(1.0111);transform-origin:0 0;">0,00  octets</div>
<div class="t" style="left:399.5px;top:344.69px;font-size:11px;font-weight:normal;color:#000;transform:scaleX(0.8990);transform-origin:0 0;">0</div>
<div class="t" style="left:444px;top:344.69px;font-size:11px;font-weight:normal;color:#000;transform:scaleX(1.0920);transform-origin:0 0;">-</div>
<div class="t" style="left:522px;top:344.69px;font-size:11px;font-weight:normal;color:#000;transform:scaleX(1.0920);transform-origin:0 0;">-</div>
<div style="left:563px;top:340px;width:65px;height:20px;overflow:hidden">
<div class="t" style="left:19px;top:4.69px;font-size:11px;font-weight:normal;color:#000;transform:scaleX(1.0111);transform-origin:0 0;">0,00  octets</div>
</div>
<div class="t" style="left:191.5px;top:364.69px;font-size:11px;font-weight:normal;color:#000;transform:scaleX(1.0111);transform-origin:0 0;">0,00  octets</div>
<div class="t" style="left:288px;top:364.69px;font-size:11px;font-weight:normal;color:#000;transform:scaleX(1.0920);transform-origin:0 0;">-</div>
<div class="t" style="left:366px;top:364.69px;font-size:11px;font-weight:normal;color:#000;transform:scaleX(1.0920);transform-origin:0 0;">-</div>
<div class="t" style="left:425.5px;top:364.69px;font-size:11px;font-weight:normal;color:#000;transform:scaleX(1.0111);transform-origin:0 0;">0,00  octets</div>
<div class="t" style="left:555.5px;top:364.69px;font-size:11px;font-weight:normal;color:#000;transform:scaleX(0.8990);transform-origin:0 0;">0</div>
<div style="left:563px;top:360px;width:65px;height:17px;overflow:hidden">
<div class="t" style="left:19px;top:4.69px;font-size:11px;font-weight:normal;color:#000;transform:scaleX(1.0111);transform-origin:0 0;">0,00  octets</div>
</div>
<div style="left:19px;top:381px;width:609px;height:18px;background:#dfe3ee"></div>
<svg style="position:absolute;left:7px;top:386px" width="9" height="9" viewBox="0 0 9 9"><rect x="0.5" y="0.5" width="8" height="8" fill="#fff" stroke="#848284"/><line x1="2" y1="4.5" x2="7" y2="4.5" stroke="#000"/></svg>
<div style="left:16px;top:390px;width:4px;height:1px;background:repeating-linear-gradient(90deg,#808080 0 1px,transparent 1px 2px)"></div>
<svg style="position:absolute;left:20px;top:384px" width="16" height="15" viewBox="0 0 16 15"><rect x="7" y="4" width="2" height="8" fill="#808080"/><rect x="4.5" y="0.5" width="7" height="4.5" rx="1" fill="#f4f4f4" stroke="#585858"/><rect x="5.5" y="1.5" width="5" height="3" fill="url(#bs)"/><rect x="0.5" y="4.5" width="6.5" height="6" rx="1" fill="#f4f4f4" stroke="#585858"/><rect x="1.5" y="5.5" width="4.5" height="3.5" fill="url(#bs)"/><rect x="9" y="4.5" width="6.5" height="6" rx="1" fill="#f4f4f4" stroke="#585858"/><rect x="10" y="5.5" width="4.5" height="3.5" fill="url(#bs)"/><rect x="1" y="10.5" width="5.5" height="3" rx="1" fill="#e4e4e4" stroke="#585858"/><rect x="9.5" y="10.5" width="5.5" height="3" rx="1" fill="#e4e4e4" stroke="#585858"/><line x1="2.5" y1="12" x2="4.5" y2="12" stroke="#888"/><line x1="11" y1="12" x2="13" y2="12" stroke="#888"/><rect x="7.5" y="12" width="1.5" height="2" fill="#f0b800"/></svg>
<div class="t" style="left:37px;top:386.69px;font-size:11px;font-weight:bold;color:#000;transform:scaleX(0.9287);transform-origin:0 0;">SQL</div>
<div style="left:628px;top:24px;width:16px;height:16px;background:#d4d0c8;box-shadow:inset -1px -1px 0 #404040,inset 1px 1px 0 #fff,inset -2px -2px 0 #808080,inset 2px 2px 0 #d4d0c8"></div>
<svg style="position:absolute;left:632px;top:30px" width="8" height="4" viewBox="0 0 8 4"><path d="M0 4 L4 0 L8 4 Z" fill="#000"/></svg>
<div style="left:628px;top:40px;width:16px;height:142px;background:#d4d0c8;box-shadow:inset -1px -1px 0 #404040,inset 1px 1px 0 #fff,inset -2px -2px 0 #808080,inset 2px 2px 0 #d4d0c8"></div>
<div style="left:628px;top:182px;width:16px;height:200px;background-color:#fff;background-image:linear-gradient(45deg,#d4d0c8 25%,transparent 25%,transparent 75%,#d4d0c8 75%),linear-gradient(45deg,#d4d0c8 25%,transparent 25%,transparent 75%,#d4d0c8 75%);background-size:2px 2px;background-position:0 0,1px 1px"></div>
<div style="left:628px;top:382px;width:16px;height:16px;background:#d4d0c8;box-shadow:inset -1px -1px 0 #404040,inset 1px 1px 0 #fff,inset -2px -2px 0 #808080,inset 2px 2px 0 #d4d0c8"></div>
<svg style="position:absolute;left:632px;top:388px" width="8" height="4" viewBox="0 0 8 4"><path d="M0 0 L8 0 L4 4 Z" fill="#000"/></svg>
<div style="left:4px;top:398px;width:16px;height:16px;background:#d4d0c8;box-shadow:inset -1px -1px 0 #404040,inset 1px 1px 0 #fff,inset -2px -2px 0 #808080,inset 2px 2px 0 #d4d0c8"></div>
<svg style="position:absolute;left:9px;top:402px" width="4" height="8" viewBox="0 0 4 8"><path d="M4 0 L0 4 L4 8 Z" fill="#000"/></svg>
<div style="left:20px;top:398px;width:578px;height:16px;background:#d4d0c8;box-shadow:inset -1px -1px 0 #404040,inset 1px 1px 0 #fff,inset -2px -2px 0 #808080,inset 2px 2px 0 #d4d0c8"></div>
<div style="left:598px;top:398px;width:14px;height:16px;background-color:#fff;background-image:linear-gradient(45deg,#d4d0c8 25%,transparent 25%,transparent 75%,#d4d0c8 75%),linear-gradient(45deg,#d4d0c8 25%,transparent 25%,transparent 75%,#d4d0c8 75%);background-size:2px 2px;background-position:0 0,1px 1px"></div>
<div style="left:612px;top:398px;width:16px;height:16px;background:#d4d0c8;box-shadow:inset -1px -1px 0 #404040,inset 1px 1px 0 #fff,inset -2px -2px 0 #808080,inset 2px 2px 0 #d4d0c8"></div>
<svg style="position:absolute;left:618px;top:402px" width="4" height="8" viewBox="0 0 4 8"><path d="M0 0 L4 4 L0 8 Z" fill="#000"/></svg>
<div style="left:628px;top:398px;width:17px;height:17px;background:#d4d0c8"></div>
<div style="left:645px;top:22px;width:2px;height:395px;background:#fff"></div>
<div style="left:646px;top:1px;width:1px;height:21px;background:#fff"></div>
<div style="left:647px;top:1px;width:3px;height:416px;background:#d4d0c8"></div>
<div style="left:650px;top:1px;width:1px;height:416px;background:#808080"></div>
<div style="left:651px;top:1px;width:561px;height:19px;background:#858285"></div>
<svg style="position:absolute;left:651px;top:3px" width="16" height="14" viewBox="0 0 16 14"><rect x="2.5" y="1.5" width="3.5" height="11" fill="url(#org)" stroke="#a05a00"/><rect x="7" y="5.5" width="3.5" height="7" fill="url(#grn)" stroke="#3a8010"/><rect x="11.5" y="9.5" width="3.5" height="3" fill="#c8d0ff" stroke="#2030a0"/><path d="M0.5 0 V13.5 H16" fill="none" stroke="#1a2a8a"/></svg>
<div class="t" style="left:669px;top:4.69px;font-size:11px;font-weight:normal;color:#d4d0c8;transform:scaleX(1.0112);transform-origin:0 0;">Statistiques</div>
<svg style="position:absolute;left:1157px;top:7px" width="8" height="8" viewBox="0 0 8 8"><g fill="#d4d0c8"><rect x="0" y="3" width="8" height="1"/><rect x="1" y="4" width="6" height="1"/><rect x="2" y="5" width="4" height="1"/><rect x="3" y="6" width="2" height="1"/></g></svg>
<svg style="position:absolute;left:1177px;top:6px" width="7" height="9" viewBox="0 0 7 9"><g fill="#d4d0c8"><rect x="1" y="0" width="5" height="1"/><rect x="1" y="1" width="1" height="4"/><rect x="4" y="1" width="2" height="4"/><rect x="0" y="5" width="7" height="1"/><rect x="3" y="6" width="1" height="3"/></g></svg>
<svg style="position:absolute;left:1197px;top:7px" width="7" height="7" viewBox="0 0 7 7"><g fill="#d4d0c8"><rect x="0" y="0" width="1" height="1"/><rect x="6" y="0" width="1" height="1"/><rect x="1" y="1" width="1" height="1"/><rect x="5" y="1" width="1" height="1"/><rect x="2" y="2" width="1" height="1"/><rect x="4" y="2" width="1" height="1"/><rect x="3" y="3" width="1" height="1"/><rect x="3" y="3" width="1" height="1"/><rect x="4" y="4" width="1" height="1"/><rect x="2" y="4" width="1" height="1"/><rect x="5" y="5" width="1" height="1"/><rect x="1" y="5" width="1" height="1"/><rect x="6" y="6" width="1" height="1"/><rect x="0" y="6" width="1" height="1"/></g></svg>
<div style="left:651px;top:20px;width:561px;height:2px;background:#fff"></div>
<div style="left:651px;top:22px;width:561px;height:1px;background:#6a686a"></div>
<div style="left:651px;top:23px;width:561px;height:18px;background:#fff"></div>
<div class="t" style="left:654px;top:26.69px;font-size:11px;font-weight:normal;color:#000;transform:scaleX(1.0061);transform-origin:0 0;">Statistiques du scénario</div>
<div style="left:1195px;top:23px;width:17px;height:19px;background:#aeabae"></div>
<div style="left:1196px;top:24px;width:14px;height:16px;background:#dcd9d4"></div>
<svg style="position:absolute;left:1199px;top:30px" width="8" height="4" viewBox="0 0 8 4"><path d="M0 0 L8 0 L4 4 Z" fill="#000"/></svg>
<div style="left:651px;top:41px;width:560px;height:353px;background:#aeabae;border-top:1px solid #8a888a"></div>
<div style="left:1211px;top:22px;width:1px;height:372px;background:#e8e6e2"></div>
<div class="t" style="left:737px;top:84.46px;font-size:16px;font-weight:normal;color:#111;transform:scaleX(0.9924);transform-origin:0 0;">Maître</div>
<div style="left:737px;top:98px;width:45px;height:1px;background:#111"></div>
<div class="t" style="left:702px;top:113.46px;font-size:16px;font-weight:normal;color:#111;transform:scaleX(1.0160);transform-origin:0 0;">155.35.128.137</div>
<div class="t" style="left:1063px;top:84.46px;font-size:16px;font-weight:normal;color:#111;">Réplication</div>
<div style="left:1063px;top:98px;width:79px;height:1px;background:#111"></div>
<div class="t" style="left:1046px;top:113.46px;font-size:16px;font-weight:normal;color:#111;transform:scaleX(1.0070);transform-origin:0 0;">155.35.128.139</div>
<svg style="position:absolute;left:705px;top:142px" width="111" height="170" viewBox="0 0 111 170"><path d="M0.8 27 Q0.8 24 3 22.5 L34 0.8 L36 167.5 L4 147 Q0.8 145 0.8 142 Z" fill="#9aaca8" stroke="#7d9290" stroke-width="1.2"/><path d="M2 30 L24 15 L24 152 L2 141 Z" fill="#f6f7fa"/><path d="M2 141 L24 152 L24 154 L2 143 Z" fill="#7d9290"/><path d="M34 1 Q38 0 44 2 L100 2 Q104 0 106 1 L110 6 L110 160 Q110 164 106 167.5 L36 167.5 Z" fill="#d6dadb" stroke="#7d9290" stroke-width="1.2"/><rect x="34.6" y="2" width="3.2" height="165" fill="#7d9290" opacity="0.75"/><rect x="105" y="6" width="4.4" height="158" fill="#7d9290" opacity="0.45"/><path d="M38 3.5 Q42 2.5 46 4 L100 4 Q103 3 105 4 L105 13 L38 13 Z" fill="#f6f6f8"/><line x1="38" y1="13.5" x2="105" y2="13.5" stroke="#7d9290" stroke-width="1" opacity="0.7"/><rect x="69" y="18" width="5.5" height="3" rx="0.8" fill="#d82020" stroke="#00000030" stroke-width="0.5"/><rect x="77" y="18" width="5.5" height="3" rx="0.8" fill="#d82020" stroke="#00000030" stroke-width="0.5"/><rect x="85" y="18" width="5.5" height="3" rx="0.8" fill="#60c040" stroke="#00000030" stroke-width="0.5"/><rect x="93" y="18" width="5.5" height="3" rx="0.8" fill="#60c040" stroke="#00000030" stroke-width="0.5"/></svg>
<svg style="position:absolute;left:1047px;top:142px" width="111" height="170" viewBox="0 0 111 170"><g transform="translate(110 0) scale(-1 1)"><path d="M0.8 27 Q0.8 24 3 22.5 L34 0.8 L36 167.5 L4 147 Q0.8 145 0.8 142 Z" fill="#8890c8" stroke="#6a78b8" stroke-width="1.2"/><path d="M2 30 L24 15 L24 152 L2 141 Z" fill="#f6f7fa"/><path d="M2 141 L24 152 L24 154 L2 143 Z" fill="#6a78b8"/><path d="M34 1 Q38 0 44 2 L100 2 Q104 0 106 1 L110 6 L110 160 Q110 164 106 167.5 L36 167.5 Z" fill="#c4cae8" stroke="#6a78b8" stroke-width="1.2"/><rect x="34.6" y="2" width="3.2" height="165" fill="#6a78b8" opacity="0.75"/><rect x="105" y="6" width="4.4" height="158" fill="#6a78b8" opacity="0.45"/><path d="M38 3.5 Q42 2.5 46 4 L100 4 Q103 3 105 4 L105 13 L38 13 Z" fill="#f6f6f8"/><line x1="38" y1="13.5" x2="105" y2="13.5" stroke="#6a78b8" stroke-width="1" opacity="0.7"/></g><rect x="38" y="18" width="5.5" height="3" rx="0.8" fill="#60c040" stroke="#00000030" stroke-width="0.5"/><rect x="46" y="18" width="5.5" height="3" rx="0.8" fill="#60c040" stroke="#00000030" stroke-width="0.5"/><rect x="54" y="18" width="5.5" height="3" rx="0.8" fill="#d82020" stroke="#00000030" stroke-width="0.5"/><rect x="62" y="18" width="5.5" height="3" rx="0.8" fill="#d82020" stroke="#00000030" stroke-width="0.5"/></svg>
<div style="left:741px;top:197px;width:66px;height:42px;border:1px solid #111"></div>
<div class="t" style="left:745px;top:202.53px;font-size:10px;font-weight:normal;color:#111;transform:scaleX(0.9266);transform-origin:0 0;">0% de spool</div>
<div class="t" style="left:748px;top:219.53px;font-size:10px;font-weight:normal;color:#111;transform:scaleX(0.9284);transform-origin:0 0;">0,00  octets</div>
<svg style="position:absolute;left:742px;top:248px" width="65" height="56" viewBox="0 0 65 56"><path d="M1 9 L1 46 A31.5 8 0 0 0 64 46 L64 9 Z" fill="url(#cg)" stroke="#6a70a8"/><ellipse cx="32.5" cy="9" rx="31.5" ry="8" fill="url(#cg)" stroke="#6a70a8"/></svg>
<div class="t" style="left:748px;top:267.23px;font-size:8px;font-weight:normal;color:#111;transform:scaleX(0.9123);transform-origin:0 0;">Modification :</div>
<div class="t" style="left:751px;top:278.23px;font-size:8px;font-weight:normal;color:#111;transform:scaleX(0.8825);transform-origin:0 0;">0,00  octets</div>
<div style="left:1053px;top:197px;width:67px;height:42px;border:1px solid #111"></div>
<div class="t" style="left:1058px;top:202.53px;font-size:10px;font-weight:normal;color:#111;transform:scaleX(0.9266);transform-origin:0 0;">0% de spool</div>
<div class="t" style="left:1061px;top:219.53px;font-size:10px;font-weight:normal;color:#111;transform:scaleX(0.9284);transform-origin:0 0;">0,00  octets</div>
<svg style="position:absolute;left:1056px;top:248px" width="65" height="56" viewBox="0 0 65 56"><path d="M1 9 L1 46 A31.5 8 0 0 0 64 46 L64 9 Z" fill="url(#cg)" stroke="#6a70a8"/><ellipse cx="32.5" cy="9" rx="31.5" ry="8" fill="url(#cg)" stroke="#6a70a8"/></svg>
<div class="t" style="left:1062px;top:267.23px;font-size:8px;font-weight:normal;color:#111;transform:scaleX(0.9123);transform-origin:0 0;">Modification :</div>
<div class="t" style="left:1065px;top:278.23px;font-size:8px;font-weight:normal;color:#111;transform:scaleX(0.8825);transform-origin:0 0;">0,00  octets</div>
<div style="left:827px;top:224px;width:198px;height:6px;background:#000"></div>
<svg style="position:absolute;left:1024px;top:220px" width="13" height="13" viewBox="0 0 13 13"><path d="M0 0 L12.5 6.5 L0 13 Z" fill="#000"/></svg>
<div class="t" style="left:896px;top:238.69px;font-size:11px;font-weight:bold;color:#111;transform:scaleX(1.0626);transform-origin:0 0;">Réplication</div>
<div style="left:651px;top:394px;width:561px;height:2px;background:#e0ded8"></div>
<div style="left:651px;top:396px;width:561px;height:20px;background:#f1f0ee"></div>
<div style="left:651px;top:395px;width:192px;height:21px;background:#dcd9d3"></div>
<svg style="position:absolute;left:653px;top:399px" width="16" height="14" viewBox="0 0 16 14"><path d="M0.5 1.5 Q0.5 0.5 1.5 0.5 H5 L6.5 2.5 H13.5 Q14.5 2.5 14.5 3.5 V12.5 H0.5 Z" fill="url(#fold)" stroke="#2a5a10"/><line x1="1" y1="13.5" x2="15" y2="13.5" stroke="#606060"/><line x1="1.5" y1="11.5" x2="13.5" y2="11.5" stroke="#f8fff0"/></svg>
<div class="t" style="left:671px;top:400.69px;font-size:11px;font-weight:normal;color:#000;">Répertoires racines</div>
<div style="left:769px;top:399px;width:1px;height:14px;background:#808080"></div>
<svg style="position:absolute;left:772px;top:397px" width="15" height="16" viewBox="0 0 15 16"><rect x="4.5" y="4.5" width="9" height="10" fill="#ffe8c0" stroke="#a05a10"/><rect x="2.5" y="2.5" width="9" height="10" fill="#ffd890" stroke="#a05a10"/><rect x="0.5" y="0.5" width="9" height="10" fill="#f8b050" stroke="#a05a10"/><path d="M2 3 H3 M4 3 H8 M2 5 H3 M4 5 H8 M2 7 H3 M4 7 H8" stroke="#a05a10"/></svg>
<div class="t" style="left:789px;top:400.69px;font-size:11px;font-weight:normal;color:#000;transform:scaleX(1.0173);transform-origin:0 0;">Propriétés</div>
<div style="left:843px;top:395px;width:82px;height:21px;background:#fff;border:1px solid #000;border-top:none;border-radius:0 0 4px 4px"></div>
<svg style="position:absolute;left:845px;top:398px" width="16" height="14" viewBox="0 0 16 14"><rect x="2.5" y="1.5" width="3.5" height="11" fill="url(#org)" stroke="#a05a00"/><rect x="7" y="5.5" width="3.5" height="7" fill="url(#grn)" stroke="#3a8010"/><rect x="11.5" y="9.5" width="3.5" height="3" fill="#c8d0ff" stroke="#2030a0"/><path d="M0.5 0 V13.5 H16" fill="none" stroke="#1a2a8a"/></svg>
<div class="t" style="left:864px;top:400.69px;font-size:11px;font-weight:normal;color:#000;transform:scaleX(1.0112);transform-origin:0 0;">Statistiques</div>
<div style="left:646px;top:416px;width:569px;height:1px;background:#fff"></div>
<div style="left:0px;top:417px;width:1215px;height:3px;background:#d4d0c8"></div>
<div style="left:2px;top:415px;width:644px;height:2px;background:#fff"></div>
<div style="left:2px;top:420px;width:1210px;height:19px;background:#858285"></div>
<div class="t" style="left:5px;top:424.69px;font-size:11px;font-weight:normal;color:#d4d0c8;transform:scaleX(0.9813);transform-origin:0 0;">Evénements</div>
<svg style="position:absolute;left:1157px;top:427px" width="8" height="8" viewBox="0 0 8 8"><g fill="#d4d0c8"><rect x="0" y="3" width="8" height="1"/><rect x="1" y="4" width="6" height="1"/><rect x="2" y="5" width="4" height="1"/><rect x="3" y="6" width="2" height="1"/></g></svg>
<svg style="position:absolute;left:1177px;top:426px" width="7" height="9" viewBox="0 0 7 9"><g fill="#d4d0c8"><rect x="1" y="0" width="5" height="1"/><rect x="1" y="1" width="1" height="4"/><rect x="4" y="1" width="2" height="4"/><rect x="0" y="5" width="7" height="1"/><rect x="3" y="6" width="1" height="3"/></g></svg>
<svg style="position:absolute;left:1197px;top:427px" width="7" height="7" viewBox="0 0 7 7"><g fill="#d4d0c8"><rect x="0" y="0" width="1" height="1"/><rect x="6" y="0" width="1" height="1"/><rect x="1" y="1" width="1" height="1"/><rect x="5" y="1" width="1" height="1"/><rect x="2" y="2" width="1" height="1"/><rect x="4" y="2" width="1" height="1"/><rect x="3" y="3" width="1" height="1"/><rect x="3" y="3" width="1" height="1"/><rect x="4" y="4" width="1" height="1"/><rect x="2" y="4" width="1" height="1"/><rect x="5" y="5" width="1" height="1"/><rect x="1" y="5" width="1" height="1"/><rect x="6" y="6" width="1" height="1"/><rect x="0" y="6" width="1" height="1"/></g></svg>
<div style="left:2px;top:439px;width:1210px;height:3px;background:#fff"></div>
<div style="left:2px;top:442px;width:1209px;height:150px;background:#e8e4e8;border-top:1px solid #505050;border-left:1px solid #505050"></div>
<div style="left:3px;top:443px;width:1192px;height:22px;background:linear-gradient(#fcfbf9,#f0eee8 60%,#e0ded6);border-bottom:1px solid #505a5a"></div>
<div style="left:126px;top:443px;width:1px;height:21px;background:#c8c6c0"></div>
<div style="left:127px;top:443px;width:1px;height:21px;background:#606868"></div>
<div style="left:128px;top:443px;width:1px;height:21px;background:#fff"></div>
<div style="left:188px;top:443px;width:1px;height:21px;background:#c8c6c0"></div>
<div style="left:189px;top:443px;width:1px;height:21px;background:#606868"></div>
<div style="left:190px;top:443px;width:1px;height:21px;background:#fff"></div>
<div style="left:313px;top:443px;width:1px;height:21px;background:#c8c6c0"></div>
<div style="left:314px;top:443px;width:1px;height:21px;background:#606868"></div>
<div style="left:315px;top:443px;width:1px;height:21px;background:#fff"></div>
<div style="left:500px;top:443px;width:1px;height:21px;background:#c8c6c0"></div>
<div style="left:501px;top:443px;width:1px;height:21px;background:#606868"></div>
<div style="left:502px;top:443px;width:1px;height:21px;background:#fff"></div>
<div style="left:750px;top:443px;width:1px;height:21px;background:#c8c6c0"></div>
<div style="left:751px;top:443px;width:1px;height:21px;background:#606868"></div>
<div style="left:752px;top:443px;width:1px;height:21px;background:#fff"></div>
<div class="t" style="left:9px;top:449.69px;font-size:11px;font-weight:normal;color:#000;transform:scaleX(0.9545);transform-origin:0 0;">ID</div>
<div class="t" style="left:134px;top:449.69px;font-size:11px;font-weight:normal;color:#000;transform:scaleX(0.9787);transform-origin:0 0;">Séquenc</div>
<div class="t" style="left:196px;top:449.69px;font-size:11px;font-weight:normal;color:#000;transform:scaleX(0.9417);transform-origin:0 0;">Sévérité</div>
<div class="t" style="left:321.5px;top:449.69px;font-size:11px;font-weight:normal;color:#000;transform:scaleX(0.9827);transform-origin:0 0;">Hôte/Scénario</div>
<div class="t" style="left:508px;top:449.69px;font-size:11px;font-weight:normal;color:#000;transform:scaleX(0.9179);transform-origin:0 0;">Heure</div>
<div class="t" style="left:758px;top:449.69px;font-size:11px;font-weight:normal;color:#000;transform:scaleX(0.9525);transform-origin:0 0;">Evénement</div>
<svg style="position:absolute;left:177px;top:450px" width="9" height="8" viewBox="0 0 9 8"><path d="M0.5 0.5 H8.5 L4.5 7 Z" fill="none" stroke="#707070"/></svg>
<div style="left:3px;top:465px;width:1192px;height:112px;overflow:hidden">
<div style="left:0;top:19px;width:1192px;height:1px;background:repeating-linear-gradient(90deg,#fff 0 1px,#b8b4b8 1px 2px)"></div>
<div class="t" style="left:3px;top:2.69px;font-size:11px;font-weight:bold;color:#000;transform:scaleX(1.1337);transform-origin:0 0;">SR00202</div>
<div class="t" style="left:127px;top:2.69px;font-size:11px;font-weight:bold;color:#000;transform:scaleX(1.1197);transform-origin:0 0;">66</div>
<div class="t" style="left:205.5px;top:2.69px;font-size:11px;font-weight:bold;color:#000;transform:scaleX(1.0253);transform-origin:0 0;">Important</div>
<div class="t" style="left:331px;top:2.69px;font-size:11px;font-weight:bold;color:#000;transform:scaleX(1.1574);transform-origin:0 0;">155.35.128.139</div>
<div class="t" style="left:520px;top:2.69px;font-size:11px;font-weight:bold;color:#000;transform:scaleX(1.1993);transform-origin:0 0;">01/06/2012 10:49:40</div>
<svg style="position:absolute;left:188px;top:1px" width="10" height="17" viewBox="0 0 10 17"><ellipse cx="4.5" cy="2" rx="2.2" ry="1.6" fill="#c0d0ff" stroke="#1a2a90"/><path d="M1.5 5.5 H6.5 V12.5 H8.5 V15.5 H0.5 V12.5 H3 V7.5 H1.5 Z" fill="#b8c8f8" stroke="#1a2a90"/></svg>
<svg style="position:absolute;left:315px;top:3px" width="12" height="14" viewBox="0 0 12 14"><rect x="0.5" y="0.5" width="11" height="8.5" rx="1.5" fill="#f0f0f0" stroke="#6a6a6a"/><rect x="2" y="2" width="8" height="5.5" fill="url(#bs)"/><rect x="0.5" y="9.5" width="11" height="3.5" rx="1" fill="#e8e8e8" stroke="#6a6a6a"/><line x1="3" y1="11.5" x2="9" y2="11.5" stroke="#999"/></svg>
<svg style="position:absolute;left:500px;top:1px" width="14" height="15" viewBox="0 0 14 15"><rect x="5.5" y="0" width="3" height="1.5" fill="#8a5000"/><line x1="7" y1="1" x2="7" y2="3" stroke="#8a5000"/><path d="M1 3.5 L2.5 2 M13 3.5 L11.5 2" stroke="#8a5000" stroke-width="1.3"/><circle cx="7" cy="8.5" r="6" fill="url(#org)" stroke="#8a5000"/><path d="M6.5 5 V9.5 H10" stroke="#503000" stroke-width="1.1" fill="none"/></svg>
<div class="t" style="left:751.5px;top:2.69px;font-size:11px;font-weight:bold;color:#000;transform:scaleX(1.0700);transform-origin:0 0;">Toutes les modifications effectuées pendant la synchronisation ont été répliquées</div>
<div style="left:0;top:38px;width:1192px;height:1px;background:repeating-linear-gradient(90deg,#fff 0 1px,#b8b4b8 1px 2px)"></div>
<div class="t" style="left:3px;top:21.69px;font-size:11px;font-weight:normal;color:#000;transform:scaleX(0.9671);transform-origin:0 0;">IM00405</div>
<div class="t" style="left:127px;top:21.69px;font-size:11px;font-weight:normal;color:#000;transform:scaleX(0.9236);transform-origin:0 0;">65</div>
<div class="t" style="left:205.5px;top:21.69px;font-size:11px;font-weight:normal;color:#000;transform:scaleX(0.9099);transform-origin:0 0;">Infos</div>
<div class="t" style="left:330.5px;top:21.69px;font-size:11px;font-weight:normal;color:#000;transform:scaleX(0.9528);transform-origin:0 0;">SharePoint 3</div>
<div class="t" style="left:520px;top:21.69px;font-size:11px;font-weight:normal;color:#000;transform:scaleX(1.0176);transform-origin:0 0;">01/06/2012 10:49:38</div>
<svg style="position:absolute;left:188px;top:20px" width="10" height="17" viewBox="0 0 10 17"><ellipse cx="4.5" cy="2" rx="2.2" ry="1.6" fill="#c0d0ff" stroke="#1a2a90"/><path d="M1.5 5.5 H6.5 V12.5 H8.5 V15.5 H0.5 V12.5 H3 V7.5 H1.5 Z" fill="#b8c8f8" stroke="#1a2a90"/></svg>
<svg style="position:absolute;left:313px;top:21px" width="16" height="15" viewBox="0 0 16 15"><rect x="7.5" y="0.5" width="7.5" height="12" rx="1" fill="#ececec" stroke="#707070"/><line x1="10" y1="3.5" x2="14" y2="3.5" stroke="#707070"/><line x1="10" y1="6" x2="14" y2="6" stroke="#707070"/><line x1="10" y1="8.5" x2="14" y2="8.5" stroke="#707070"/><rect x="0.5" y="3.5" width="10.5" height="8" rx="1" fill="#f4f4f4" stroke="#707070"/><rect x="2" y="5" width="7.5" height="5" fill="url(#bs)"/><rect x="0.5" y="11.5" width="10.5" height="3" rx="1" fill="#e0e0e0" stroke="#707070"/></svg>
<svg style="position:absolute;left:500px;top:20px" width="14" height="15" viewBox="0 0 14 15"><rect x="5.5" y="0" width="3" height="1.5" fill="#8a5000"/><line x1="7" y1="1" x2="7" y2="3" stroke="#8a5000"/><path d="M1 3.5 L2.5 2 M13 3.5 L11.5 2" stroke="#8a5000" stroke-width="1.3"/><circle cx="7" cy="8.5" r="6" fill="url(#org)" stroke="#8a5000"/><path d="M6.5 5 V9.5 H10" stroke="#503000" stroke-width="1.1" fill="none"/></svg>
<div class="t" style="left:751.5px;top:21.69px;font-size:11px;font-weight:normal;color:#000;transform:scaleX(0.9737);transform-origin:0 0;">Publication du rapport Synchronisation créé à 01/06/2012 10:49:37 dans Rapports</div>
<div style="left:0;top:57px;width:1192px;height:1px;background:repeating-linear-gradient(90deg,#fff 0 1px,#b8b4b8 1px 2px)"></div>
<div class="t" style="left:3px;top:40.69px;font-size:11px;font-weight:bold;color:#000;transform:scaleX(1.1337);transform-origin:0 0;">SR00120</div>
<div class="t" style="left:127px;top:40.69px;font-size:11px;font-weight:bold;color:#000;transform:scaleX(1.1197);transform-origin:0 0;">63</div>
<div class="t" style="left:205.5px;top:40.69px;font-size:11px;font-weight:bold;color:#000;transform:scaleX(1.0253);transform-origin:0 0;">Important</div>
<div class="t" style="left:331px;top:40.69px;font-size:11px;font-weight:bold;color:#000;transform:scaleX(1.1574);transform-origin:0 0;">155.35.128.139</div>
<div class="t" style="left:520px;top:40.69px;font-size:11px;font-weight:bold;color:#000;transform:scaleX(1.1993);transform-origin:0 0;">01/06/2012 10:49:37</div>
<svg style="position:absolute;left:188px;top:39px" width="10" height="17" viewBox="0 0 10 17"><ellipse cx="4.5" cy="2" rx="2.2" ry="1.6" fill="#c0d0ff" stroke="#1a2a90"/><path d="M1.5 5.5 H6.5 V12.5 H8.5 V15.5 H0.5 V12.5 H3 V7.5 H1.5 Z" fill="#b8c8f8" stroke="#1a2a90"/></svg>
<svg style="position:absolute;left:315px;top:41px" width="12" height="14" viewBox="0 0 12 14"><rect x="0.5" y="0.5" width="11" height="8.5" rx="1.5" fill="#f0f0f0" stroke="#6a6a6a"/><rect x="2" y="2" width="8" height="5.5" fill="url(#bs)"/><rect x="0.5" y="9.5" width="11" height="3.5" rx="1" fill="#e8e8e8" stroke="#6a6a6a"/><line x1="3" y1="11.5" x2="9" y2="11.5" stroke="#999"/></svg>
<svg style="position:absolute;left:500px;top:39px" width="14" height="15" viewBox="0 0 14 15"><rect x="5.5" y="0" width="3" height="1.5" fill="#8a5000"/><line x1="7" y1="1" x2="7" y2="3" stroke="#8a5000"/><path d="M1 3.5 L2.5 2 M13 3.5 L11.5 2" stroke="#8a5000" stroke-width="1.3"/><circle cx="7" cy="8.5" r="6" fill="url(#org)" stroke="#8a5000"/><path d="M6.5 5 V9.5 H10" stroke="#503000" stroke-width="1.1" fill="none"/></svg>
<div class="t" style="left:751.5px;top:40.69px;font-size:11px;font-weight:bold;color:#000;transform:scaleX(1.0537);transform-origin:0 0;">La synchronisation est terminée.</div>
<div style="left:0;top:76px;width:1192px;height:1px;background:repeating-linear-gradient(90deg,#fff 0 1px,#b8b4b8 1px 2px)"></div>
<div class="t" style="left:3px;top:59.69px;font-size:11px;font-weight:normal;color:#000;transform:scaleX(0.9811);transform-origin:0 0;">IR00119</div>
<div class="t" style="left:127px;top:59.69px;font-size:11px;font-weight:normal;color:#000;transform:scaleX(0.9236);transform-origin:0 0;">62</div>
<div class="t" style="left:205.5px;top:59.69px;font-size:11px;font-weight:normal;color:#000;transform:scaleX(0.9099);transform-origin:0 0;">Infos</div>
<div class="t" style="left:330.5px;top:59.69px;font-size:11px;font-weight:normal;color:#000;transform:scaleX(0.9599);transform-origin:0 0;">155.35.128.139</div>
<div class="t" style="left:520px;top:59.69px;font-size:11px;font-weight:normal;color:#000;transform:scaleX(1.0176);transform-origin:0 0;">01/06/2012 10:49:37</div>
<svg style="position:absolute;left:188px;top:58px" width="10" height="17" viewBox="0 0 10 17"><ellipse cx="4.5" cy="2" rx="2.2" ry="1.6" fill="#c0d0ff" stroke="#1a2a90"/><path d="M1.5 5.5 H6.5 V12.5 H8.5 V15.5 H0.5 V12.5 H3 V7.5 H1.5 Z" fill="#b8c8f8" stroke="#1a2a90"/></svg>
<svg style="position:absolute;left:315px;top:60px" width="12" height="14" viewBox="0 0 12 14"><rect x="0.5" y="0.5" width="11" height="8.5" rx="1.5" fill="#f0f0f0" stroke="#6a6a6a"/><rect x="2" y="2" width="8" height="5.5" fill="url(#bs)"/><rect x="0.5" y="9.5" width="11" height="3.5" rx="1" fill="#e8e8e8" stroke="#6a6a6a"/><line x1="3" y1="11.5" x2="9" y2="11.5" stroke="#999"/></svg>
<svg style="position:absolute;left:500px;top:58px" width="14" height="15" viewBox="0 0 14 15"><rect x="5.5" y="0" width="3" height="1.5" fill="#8a5000"/><line x1="7" y1="1" x2="7" y2="3" stroke="#8a5000"/><path d="M1 3.5 L2.5 2 M13 3.5 L11.5 2" stroke="#8a5000" stroke-width="1.3"/><circle cx="7" cy="8.5" r="6" fill="url(#org)" stroke="#8a5000"/><path d="M6.5 5 V9.5 H10" stroke="#503000" stroke-width="1.1" fill="none"/></svg>
<div class="t" style="left:751.5px;top:59.69px;font-size:11px;font-weight:normal;color:#000;transform:scaleX(0.9692);transform-origin:0 0;">Le répertoire racine C:/Test2 a été synchronisé.</div>
<div style="left:0;top:103px;width:1192px;height:1px;background:repeating-linear-gradient(90deg,#fff 0 1px,#b8b4b8 1px 2px)"></div>
<div class="t" style="left:3px;top:78.69px;font-size:11px;font-weight:bold;color:#000;transform:scaleX(1.1337);transform-origin:0 0;">SR00139</div>
<div class="t" style="left:127px;top:78.69px;font-size:11px;font-weight:bold;color:#000;transform:scaleX(1.1197);transform-origin:0 0;">61</div>
<div class="t" style="left:205.5px;top:78.69px;font-size:11px;font-weight:bold;color:#000;transform:scaleX(1.0253);transform-origin:0 0;">Important</div>
<div class="t" style="left:331px;top:78.69px;font-size:11px;font-weight:bold;color:#000;transform:scaleX(1.1574);transform-origin:0 0;">155.35.128.137</div>
<div class="t" style="left:520px;top:78.69px;font-size:11px;font-weight:bold;color:#000;transform:scaleX(1.1993);transform-origin:0 0;">01/06/2012 10:49:34</div>
<svg style="position:absolute;left:188px;top:77px" width="10" height="17" viewBox="0 0 10 17"><ellipse cx="4.5" cy="2" rx="2.2" ry="1.6" fill="#c0d0ff" stroke="#1a2a90"/><path d="M1.5 5.5 H6.5 V12.5 H8.5 V15.5 H0.5 V12.5 H3 V7.5 H1.5 Z" fill="#b8c8f8" stroke="#1a2a90"/></svg>
<svg style="position:absolute;left:315px;top:79px" width="12" height="14" viewBox="0 0 12 14"><rect x="0.5" y="0.5" width="11" height="8.5" rx="1.5" fill="#f0f0f0" stroke="#6a6a6a"/><rect x="2" y="2" width="8" height="5.5" fill="url(#bs)"/><rect x="0.5" y="9.5" width="11" height="3.5" rx="1" fill="#e8e8e8" stroke="#6a6a6a"/><line x1="3" y1="11.5" x2="9" y2="11.5" stroke="#999"/></svg>
<svg style="position:absolute;left:320px;top:83px" width="10" height="10" viewBox="0 0 10 10"><g transform="translate(5 5)"><circle r="3.6" fill="#f8c820" stroke="#a06800" stroke-width="1"/><path d="M0 -4.6 V4.6 M-4.6 0 H4.6 M-3.2 -3.2 L3.2 3.2 M3.2 -3.2 L-3.2 3.2" stroke="#c08000" stroke-width="1.2"/><circle r="2.6" fill="#ffd830"/><circle r="0.9" fill="#7a5000"/></g></svg>
<svg style="position:absolute;left:500px;top:77px" width="14" height="15" viewBox="0 0 14 15"><rect x="5.5" y="0" width="3" height="1.5" fill="#8a5000"/><line x1="7" y1="1" x2="7" y2="3" stroke="#8a5000"/><path d="M1 3.5 L2.5 2 M13 3.5 L11.5 2" stroke="#8a5000" stroke-width="1.3"/><circle cx="7" cy="8.5" r="6" fill="url(#org)" stroke="#8a5000"/><path d="M6.5 5 V9.5 H10" stroke="#503000" stroke-width="1.1" fill="none"/></svg>
<div class="t" style="left:751.5px;top:78.69px;font-size:11px;font-weight:bold;color:#000;transform:scaleX(1.0700);transform-origin:0 0;">Démarrage : Synchronisation Fichier (Ignorer les fichiers dont la taille et l&#x27;heure de</div>
<div class="t" style="left:751.5px;top:91.69px;font-size:11px;font-weight:bold;color:#000;transform:scaleX(1.0561);transform-origin:0 0;">modification sont identiques)</div>
<div style="left:0;top:135px;width:1192px;height:1px;background:repeating-linear-gradient(90deg,#fff 0 1px,#b8b4b8 1px 2px)"></div>
<div class="t" style="left:3px;top:105.69px;font-size:11px;font-weight:bold;color:#000;transform:scaleX(1.1337);transform-origin:0 0;">SR00014</div>
<div class="t" style="left:127px;top:105.69px;font-size:11px;font-weight:bold;color:#000;transform:scaleX(1.1197);transform-origin:0 0;">60</div>
<div class="t" style="left:205.5px;top:105.69px;font-size:11px;font-weight:bold;color:#000;transform:scaleX(1.0253);transform-origin:0 0;">Important</div>
<div class="t" style="left:331px;top:105.69px;font-size:11px;font-weight:bold;color:#000;transform:scaleX(1.1574);transform-origin:0 0;">155.35.128.137</div>
<div class="t" style="left:520px;top:105.69px;font-size:11px;font-weight:bold;color:#000;transform:scaleX(1.1993);transform-origin:0 0;">01/06/2012 10:49:30</div>
<svg style="position:absolute;left:188px;top:104px" width="10" height="17" viewBox="0 0 10 17"><ellipse cx="4.5" cy="2" rx="2.2" ry="1.6" fill="#c0d0ff" stroke="#1a2a90"/><path d="M1.5 5.5 H6.5 V12.5 H8.5 V15.5 H0.5 V12.5 H3 V7.5 H1.5 Z" fill="#b8c8f8" stroke="#1a2a90"/></svg>
<svg style="position:absolute;left:315px;top:106px" width="12" height="14" viewBox="0 0 12 14"><rect x="0.5" y="0.5" width="11" height="8.5" rx="1.5" fill="#f0f0f0" stroke="#6a6a6a"/><rect x="2" y="2" width="8" height="5.5" fill="url(#bs)"/><rect x="0.5" y="9.5" width="11" height="3.5" rx="1" fill="#e8e8e8" stroke="#6a6a6a"/><line x1="3" y1="11.5" x2="9" y2="11.5" stroke="#999"/></svg>
<svg style="position:absolute;left:320px;top:110px" width="10" height="10" viewBox="0 0 10 10"><g transform="translate(5 5)"><circle r="3.6" fill="#f8c820" stroke="#a06800" stroke-width="1"/><path d="M0 -4.6 V4.6 M-4.6 0 H4.6 M-3.2 -3.2 L3.2 3.2 M3.2 -3.2 L-3.2 3.2" stroke="#c08000" stroke-width="1.2"/><circle r="2.6" fill="#ffd830"/><circle r="0.9" fill="#7a5000"/></g></svg>
<svg style="position:absolute;left:500px;top:104px" width="14" height="15" viewBox="0 0 14 15"><rect x="5.5" y="0" width="3" height="1.5" fill="#8a5000"/><line x1="7" y1="1" x2="7" y2="3" stroke="#8a5000"/><path d="M1 3.5 L2.5 2 M13 3.5 L11.5 2" stroke="#8a5000" stroke-width="1.3"/><circle cx="7" cy="8.5" r="6" fill="url(#org)" stroke="#8a5000"/><path d="M6.5 5 V9.5 H10" stroke="#503000" stroke-width="1.1" fill="none"/></svg>
<div class="t" style="left:751.5px;top:105.69px;font-size:11px;font-weight:bold;color:#000;transform:scaleX(1.0700);transform-origin:0 0;">Démarrage du scénario SharePoint 3</div>
<div style="left:124px;top:0;width:1px;height:112px;background:repeating-linear-gradient(180deg,#fff 0 1px,#b8b4b8 1px 2px)"></div>
<div style="left:186px;top:0;width:1px;height:112px;background:repeating-linear-gradient(180deg,#fff 0 1px,#b8b4b8 1px 2px)"></div>
<div style="left:311px;top:0;width:1px;height:112px;background:repeating-linear-gradient(180deg,#fff 0 1px,#b8b4b8 1px 2px)"></div>
<div style="left:498px;top:0;width:1px;height:112px;background:repeating-linear-gradient(180deg,#fff 0 1px,#b8b4b8 1px 2px)"></div>
<div style="left:748px;top:0;width:1px;height:112px;background:repeating-linear-gradient(180deg,#fff 0 1px,#b8b4b8 1px 2px)"></div>
</div>
<div style="left:1195px;top:443px;width:16px;height:16px;background:#d4d0c8;box-shadow:inset -1px -1px 0 #404040,inset 1px 1px 0 #fff,inset -2px -2px 0 #808080,inset 2px 2px 0 #d4d0c8"></div>
<svg style="position:absolute;left:1199px;top:449px" width="8" height="4" viewBox="0 0 8 4"><path d="M0 4 L4 0 L8 4 Z" fill="#000"/></svg>
<div style="left:1195px;top:459px;width:16px;height:72px;background:#d4d0c8;box-shadow:inset -1px -1px 0 #404040,inset 1px 1px 0 #fff,inset -2px -2px 0 #808080,inset 2px 2px 0 #d4d0c8"></div>
<div style="left:1195px;top:531px;width:16px;height:30px;background-color:#fff;background-image:linear-gradient(45deg,#d4d0c8 25%,transparent 25%,transparent 75%,#d4d0c8 75%),linear-gradient(45deg,#d4d0c8 25%,transparent 25%,transparent 75%,#d4d0c8 75%);background-size:2px 2px;background-position:0 0,1px 1px"></div>
<div style="left:1195px;top:561px;width:16px;height:16px;background:#d4d0c8;box-shadow:inset -1px -1px 0 #404040,inset 1px 1px 0 #fff,inset -2px -2px 0 #808080,inset 2px 2px 0 #d4d0c8"></div>
<svg style="position:absolute;left:1199px;top:567px" width="8" height="4" viewBox="0 0 8 4"><path d="M0 0 L8 0 L4 4 Z" fill="#000"/></svg>
<div style="left:1211px;top:442px;width:1px;height:150px;background:#e8e6e2"></div>
<div style="left:3px;top:577px;width:16px;height:15px;background:#d4d0c8;box-shadow:inset -1px -1px 0 #404040,inset 1px 1px 0 #fff,inset -2px -2px 0 #808080,inset 2px 2px 0 #d4d0c8"></div>
<svg style="position:absolute;left:8px;top:581px" width="4" height="8" viewBox="0 0 4 8"><path d="M4 0 L0 4 L4 8 Z" fill="#000"/></svg>
<div style="left:19px;top:577px;width:1100px;height:15px;background:#d4d0c8;box-shadow:inset -1px -1px 0 #404040,inset 1px 1px 0 #fff,inset -2px -2px 0 #808080,inset 2px 2px 0 #d4d0c8"></div>
<div style="left:1119px;top:577px;width:60px;height:15px;background-color:#fff;background-image:linear-gradient(45deg,#d4d0c8 25%,transparent 25%,transparent 75%,#d4d0c8 75%),linear-gradient(45deg,#d4d0c8 25%,transparent 25%,transparent 75%,#d4d0c8 75%);background-size:2px 2px;background-position:0 0,1px 1px"></div>
<div style="left:1179px;top:577px;width:16px;height:15px;background:#d4d0c8;box-shadow:inset -1px -1px 0 #404040,inset 1px 1px 0 #fff,inset -2px -2px 0 #808080,inset 2px 2px 0 #d4d0c8"></div>
<svg style="position:absolute;left:1185px;top:581px" width="4" height="8" viewBox="0 0 4 8"><path d="M0 0 L4 4 L0 8 Z" fill="#000"/></svg>
<div style="left:1195px;top:577px;width:16px;height:15px;background:#d4d0c8"></div>
<div style="left:2px;top:591px;width:1210px;height:1px;background:#404040"></div>
<div style="left:2px;top:592px;width:1210px;height:1px;background:#686868"></div>
<div style="left:2px;top:593px;width:1210px;height:1px;background:#e0ded8"></div>
<div style="left:2px;top:594px;width:526px;height:22px;background:#dcd9d4"></div>
<div style="left:528px;top:596px;width:684px;height:20px;background:#efeeeb"></div>
<div style="left:2px;top:596px;width:68px;height:20px;background:#fff;border:1px solid #000;border-top:none;border-radius:0 0 5px 5px"></div>
<div class="t" style="left:6px;top:600.69px;font-size:11px;font-weight:normal;color:#000;transform:scaleX(0.9813);transform-origin:0 0;">Evénements</div>
<div class="t" style="left:74px;top:600.69px;font-size:11px;font-weight:normal;color:#000;">Résultats de la validation du scénario</div>
<div style="left:259px;top:598px;width:1px;height:15px;background:#808080"></div>
<div class="t" style="left:263px;top:600.69px;font-size:11px;font-weight:normal;color:#000;transform:scaleX(0.9927);transform-origin:0 0;">Résultats des modifications appliquées aux propriétés</div>
<div style="left:651px;top:0px;width:561px;height:1px;background:#f4f4f4"></div>
<div style="left:1212px;top:0px;width:2px;height:627px;background:#e0ded8"></div>
<div style="left:1214px;top:0px;width:1px;height:627px;background:#808080"></div>
</body></html>
